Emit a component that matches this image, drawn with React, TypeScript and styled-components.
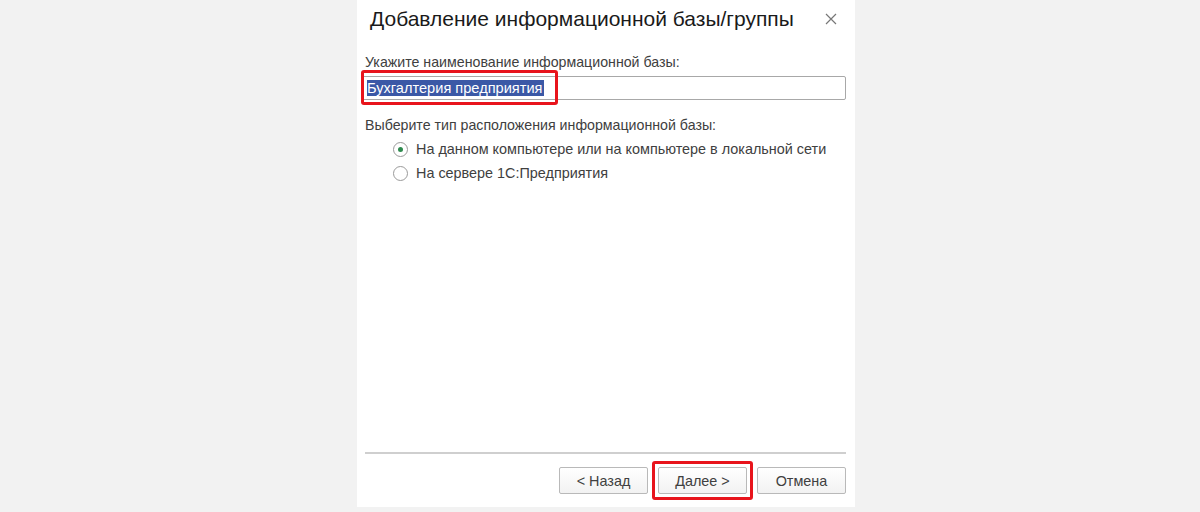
import React from "react";
import styled, { createGlobalStyle } from "styled-components";

const Global = createGlobalStyle`
  html, body { margin: 0; padding: 0; background: #f2f2f2; }
  body { font-family: "Liberation Sans", Arial, sans-serif; }
`;

const Page = styled.div`
  width: 1200px;
  height: 512px;
  display: flex;
  padding-left: 357px;
  box-sizing: border-box;
`;

const Dialog = styled.div`
  width: 498px;
  height: 507px;
  background: #ffffff;
  display: flex;
  flex-direction: column;
  box-sizing: border-box;
  padding: 0 9px 0 5px;
`;

const TitleBar = styled.div`
  display: flex;
  align-items: center;
  justify-content: space-between;
  height: 38px;
  padding: 0 8px 0 8px;
`;

const Title = styled.div`
  font-size: 21px;
  color: #1a1a1a;
`;

const Close = styled.div`
  width: 14px;
  height: 14px;
  display: flex;
  align-items: center;
  justify-content: center;
`;

const Body = styled.div`
  flex: 1;
  display: flex;
  flex-direction: column;
  padding-top: 16px;
`;

const Label = styled.div<{ $mt?: number }>`
  font-size: 14.2px;
  color: #404040;
  padding-left: 3px;
  margin-top: ${(p) => p.$mt ?? 0}px;
  line-height: 17px;
`;

const InputWrap = styled.div`
  position: relative;
  margin-top: 5px;
`;

const Input = styled.div`
  height: 24px;
  border: 1px solid #a8a8a8;
  border-radius: 2px;
  box-sizing: border-box;
  display: flex;
  align-items: center;
  padding-left: 4px;
`;

const Selected = styled.span`
  background: #3b58a6;
  color: #fff;
  font-size: 14.6px;
  line-height: 16px;
  padding-right: 1px;
`;

const RedBox = styled.div<{ $l: number; $t: number; $w: number; $h: number }>`
  position: absolute;
  left: ${(p) => p.$l}px;
  top: ${(p) => p.$t}px;
  width: ${(p) => p.$w}px;
  height: ${(p) => p.$h}px;
  border: 3px solid #e8141c;
  border-radius: 3px;
  box-sizing: border-box;
  pointer-events: none;
`;

const RadioList = styled.div`
  display: flex;
  flex-direction: column;
  gap: 7px;
  padding-left: 31px;
  margin-top: 7px;
`;

const RadioRow = styled.div`
  display: flex;
  align-items: center;
  gap: 8px;
  font-size: 14.4px;
  color: #404040;
  line-height: 17px;
`;

const RadioCircle = styled.div<{ $on?: boolean }>`
  width: 15px;
  height: 15px;
  border-radius: 50%;
  border: 1px solid #9a9a9a;
  box-sizing: border-box;
  background: #fff;
  display: flex;
  align-items: center;
  justify-content: center;
  &::after {
    content: "";
    width: 5px;
    height: 5px;
    border-radius: 50%;
    background: ${(p) => (p.$on ? "#2e8a4e" : "transparent")};
  }
`;

const Spacer = styled.div`
  flex: 1;
`;

const Separator = styled.div`
  height: 2px;
  background: #cfcfcf;
  margin: 0 0 0 3px;
`;

const Footer = styled.div`
  display: flex;
  justify-content: flex-end;
  gap: 10px;
  padding: 13px 0 13px;
`;

const BtnWrap = styled.div`
  position: relative;
`;

const Button = styled.div`
  width: 89px;
  height: 27px;
  box-sizing: border-box;
  border: 1px solid #b9b9b9;
  border-radius: 2px;
  background: linear-gradient(#ffffff, #f2f2f2);
  display: flex;
  align-items: center;
  justify-content: center;
  font-size: 14.4px;
  color: #404040;
`;

export default function App() {
  return (
    <>
      <Global />
      <Page>
        <Dialog>
          <TitleBar>
            <Title>Добавление информационной базы/группы</Title>
            <Close>
              <svg width="12" height="12" viewBox="0 0 12 12">
                <path d="M1 1 L11 11 M11 1 L1 11" stroke="#777" strokeWidth="1.2" />
              </svg>
            </Close>
          </TitleBar>
          <Body>
            <Label>Укажите наименование информационной базы:</Label>
            <InputWrap>
              <Input>
                <Selected>Бухгалтерия предприятия</Selected>
              </Input>
              <RedBox $l={-1} $t={-6} $w={197} $h={35} />
            </InputWrap>
            <Label $mt={17}>Выберите тип расположения информационной базы:</Label>
            <RadioList>
              <RadioRow>
                <RadioCircle $on />
                На данном компьютере или на компьютере в локальной сети
              </RadioRow>
              <RadioRow>
                <RadioCircle />
                На сервере 1С:Предприятия
              </RadioRow>
            </RadioList>
            <Spacer />
            <Separator />
            <Footer>
              <Button>&lt; Назад</Button>
              <BtnWrap>
                <Button>Далее &gt;</Button>
                <RedBox $l={-6} $t={-6} $w={101} $h={39} />
              </BtnWrap>
              <Button>Отмена</Button>
            </Footer>
          </Body>
        </Dialog>
      </Page>
    </>
  );
}
